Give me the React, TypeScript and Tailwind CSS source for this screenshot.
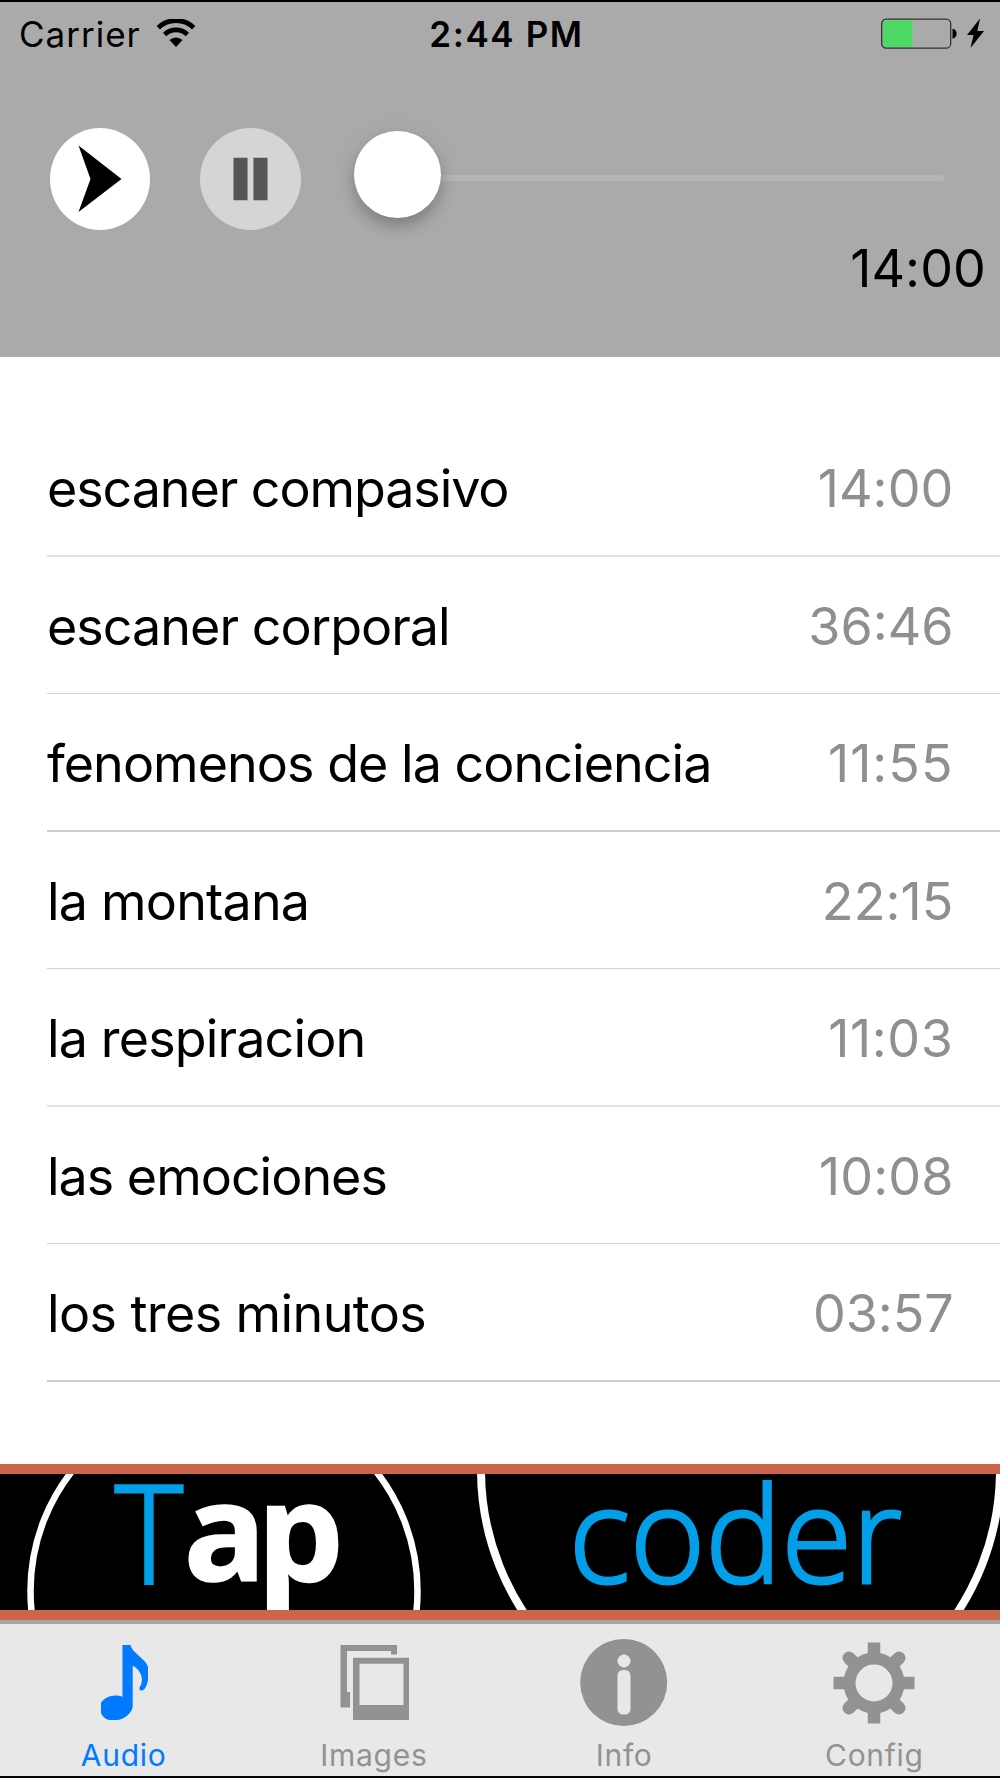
import React from "react";

interface Track {
  title: string;
  duration: string;
  titleClass: string;
  durationClass: string;
  lineClass: string;
}

const tracks: Track[] = [
  { title: "escaner compasivo", duration: "14:00", titleClass: "tracking-[-1.08px]", durationClass: "tracking-[0.1px]", lineClass: "border-b-2 border-[#e3e3e5]" },
  { title: "escaner corporal", duration: "36:46", titleClass: "tracking-[-0.96px]", durationClass: "tracking-[0px]", lineClass: "border-b border-[#d4d4d6]" },
  { title: "fenomenos de la conciencia", duration: "11:55", titleClass: "tracking-[-0.96px]", durationClass: "tracking-[1px]", lineClass: "border-b-2 border-[#cdccd1]" },
  { title: "la montana", duration: "22:15", titleClass: "tracking-[-0.8px]", durationClass: "tracking-[0.1px]", lineClass: "border-b border-[#d4d4d6]" },
  { title: "la respiracion", duration: "11:03", titleClass: "tracking-[-0.85px]", durationClass: "tracking-[0.6px]", lineClass: "border-b-2 border-[#e3e3e5]" },
  { title: "las emociones", duration: "10:08", titleClass: "tracking-[-1px]", durationClass: "tracking-[0.1px]", lineClass: "border-b border-[#d4d4d6]" },
  { title: "los tres minutos", duration: "03:57", titleClass: "tracking-[-0.6px]", durationClass: "tracking-[-0.1px]", lineClass: "border-b-2 border-[#cdccd1]" },
];

const WifiIcon = () => (
  <svg className="ml-[15px] h-[30px] w-[40px]" viewBox="0 0.5 40 30" fill="none">
    <path d="M2.3 9.2A25.5 25.5 0 0 1 37.7 9.2" stroke="black" strokeWidth="4.8" />
    <path d="M8.6 15.9A16.4 16.4 0 0 1 31.4 15.9" stroke="black" strokeWidth="4.8" />
    <path d="M13.4 21.6A9.6 9.6 0 0 1 26.6 21.6L20 28.5Z" fill="black" />
  </svg>
);

const BatteryIcon = () => (
  <svg className="h-[32px] w-[104px]" viewBox="0 0.5 104 32" fill="none">
    <rect x="1.7" y="1.7" width="69" height="29" rx="4.5" stroke="#333" strokeWidth="1.3" />
    <path d="M3 6a3 3 0 0 1 3-3H32.5V29.4H6a3 3 0 0 1-3-3Z" fill="#4cd964" />
    <path d="M72.5 11.3C78 12 78 20.5 72.5 21.3Z" fill="black" />
    <path d="M100 1L87 17.5H93.5L90.5 30.5L104 13.5H97.3Z" fill="black" />
  </svg>
);

const StatusBar = () => (
  <div className="grid h-[64px] grid-cols-3 items-center">
    <div className="flex items-center pl-[19px]">
      <span className="text-[35px] leading-[42px] tracking-[1px]">Carrier</span>
      <WifiIcon />
    </div>
    <span className="pl-[13px] text-center text-[35px] leading-[42px] font-semibold tracking-[1.6px]">2:44 PM</span>
    <div className="flex justify-end pr-[16px]">
      <BatteryIcon />
    </div>
  </div>
);

const PlayButton = () => (
  <button className="h-[102px] w-[100px]">
    <svg viewBox="0 0 100 102" className="h-full w-full">
      <ellipse cx="50" cy="51" rx="50" ry="51" fill="white" />
      <path d="M28.5 17.5L71.5 51L28.5 84L40.5 51Z" fill="black" />
    </svg>
  </button>
);

const PauseButton = () => (
  <button className="ml-[50px] h-[102px] w-[101px]">
    <svg viewBox="0 0 101 102" className="h-full w-full">
      <ellipse cx="50.5" cy="51" rx="50.5" ry="51" fill="#d5d5d5" />
      <path d="M33.5 29.7h14v42.6h-14ZM53.5 29.7h14v42.6h-14Z" fill="#555" />
    </svg>
  </button>
);

const Slider = () => (
  <div className="relative ml-[53px] h-[102px] w-[590px]">
    <div className="absolute top-[47px] left-[4px] h-[6px] w-[586px] rounded-full bg-[#b5b5b5]" />
    <div className="absolute top-[3px] left-0 size-[87px] rounded-full bg-white shadow-[0_8px_14px_rgba(0,0,0,0.22),0_3px_30px_rgba(0,0,0,0.06)]" />
  </div>
);

const Player = () => (
  <header className="h-[357px] border-t-2 border-black bg-[#aaaaaa]">
    <StatusBar />
    <div className="mt-[62px] flex pl-[50px]">
      <PlayButton />
      <PauseButton />
      <Slider />
    </div>
    <div className="mt-[7px] pr-[14px] text-right text-[52px] leading-[64px] tracking-[0.1px]">14:00</div>
  </header>
);

const TrackRow: React.FC<Track> = ({ title, duration, titleClass, durationClass, lineClass }) => (
  <li className={`ml-[47px] flex h-[137.5px] items-center justify-between pt-[5px] pr-[46.5px] text-[52px] leading-[64px] ${lineClass}`}>
    <span className={titleClass}>{title}</span>
    <span className={`text-[#8e8e93] ${durationClass}`}>{duration}</span>
  </li>
);

const Banner = () => (
  <div className="h-[156px] border-y-10 border-[#cb644b] bg-black">
    <svg viewBox="0 1474 1000 136" className="block h-[136px] w-full">
      <circle cx="224" cy="1591" r="193.5" fill="none" stroke="white" strokeWidth="6.5" />
      <circle cx="740.5" cy="1470" r="259.5" fill="none" stroke="white" strokeWidth="8" />
      <g fill="#009fe8" stroke="#009fe8" strokeWidth="3" className="font-['Open_Sans'] font-light">
        <text x="115" y="1583" fontSize="137" textLength="68" lengthAdjust="spacingAndGlyphs">T</text>
        <text x="569" y="1582.5" fontSize="133" textLength="333" lengthAdjust="spacingAndGlyphs">coder</text>
      </g>
      <text x="183.5 257" y="1581" fontSize="137" fill="white" stroke="white" strokeWidth="1.5" className="font-['Open_Sans'] font-bold">ap</text>
    </svg>
  </div>
);

const AudioIcon = () => (
  <svg className="size-[88px]" viewBox="80 1639 88 88" fill="#007aff">
    <path d="M122.5 1645H130.5C132 1653 146 1659 148 1667V1680C147 1685 145 1690.5 141.5 1690.5C139 1690.5 138.500 1688 141 1685C144 1677 140 1670 132.7 1665.500V1706C132.7 1712 125 1719 118 1720H109C105 1719 102 1716 101 1713V1703C103 1699 109 1695.500 116 1695.500C119 1695.500 121 1696 122.5 1697Z" />
  </svg>
);

const ImagesIcon = () => (
  <svg className="size-[88px]" viewBox="330 1639 88 88" fill="#929292">
    <path d="M340.5 1645H397V1654.5H391V1651H347V1692H350V1707.5H340.5Z" />
    <path fillRule="evenodd" d="M353 1657.7H409V1720H353ZM359.5 1663.7V1705H403.5V1663.7Z" />
  </svg>
);

const InfoIcon = () => (
  <svg className="size-[88px]" viewBox="580 1639 88 88">
    <circle cx="623.7" cy="1682.5" r="43.5" fill="#929292" />
    <circle cx="624" cy="1661" r="6.5" fill="#e8e8e8" />
    <rect x="617.5" y="1670" width="13" height="44.5" rx="5.5" fill="#e8e8e8" />
  </svg>
);

const ConfigIcon = () => (
  <svg className="size-[88px]" viewBox="-44 -44 88 88" fill="none">
    <circle r="24.5" stroke="#929292" strokeWidth="12" />
    <path d="M0-26V-40.5M0 26V40.5M-26 0H-40.5M26 0H40.5" stroke="#929292" strokeWidth="12.5" />
    <path d="M-18-18L-25-25M18-18L25-25M-18 18L-25 25M18 18L25 25" stroke="#929292" strokeWidth="13" strokeLinecap="round" />
  </svg>
);

const tabs = [
  { label: "Audio", icon: <AudioIcon />, color: "text-[#007aff]" },
  { label: "Images", icon: <ImagesIcon />, color: "text-[#929292]" },
  { label: "Info", icon: <InfoIcon />, color: "text-[#929292]" },
  { label: "Config", icon: <ConfigIcon />, color: "text-[#929292]" },
];

const TabBar = () => (
  <nav className="h-[158px] border-t-4 border-b-2 border-t-[#a5a5a5] border-b-black bg-[#e8e8e8]">
    <ul className="-ml-[1.5px] grid w-[1001px] grid-cols-4 pt-[15px]">
      {tabs.map((tab) => (
        <li key={tab.label} className={`flex flex-col items-center ${tab.color}`}>
          {tab.icon}
          <span className="mt-[9px] text-[30px] leading-[38px] tracking-[0.7px]">{tab.label}</span>
        </li>
      ))}
    </ul>
  </nav>
);

export default function App() {
  return (
    <div className="flex h-[1778px] w-[1000px] flex-col overflow-hidden bg-white font-['Inter',sans-serif] text-black">
      <Player />
      <main className="h-[1107px] pt-[62px]">
        <ul>
          {tracks.map((track) => (
            <TrackRow key={track.title} {...track} />
          ))}
        </ul>
      </main>
      <Banner />
      <TabBar />
    </div>
  );
}
